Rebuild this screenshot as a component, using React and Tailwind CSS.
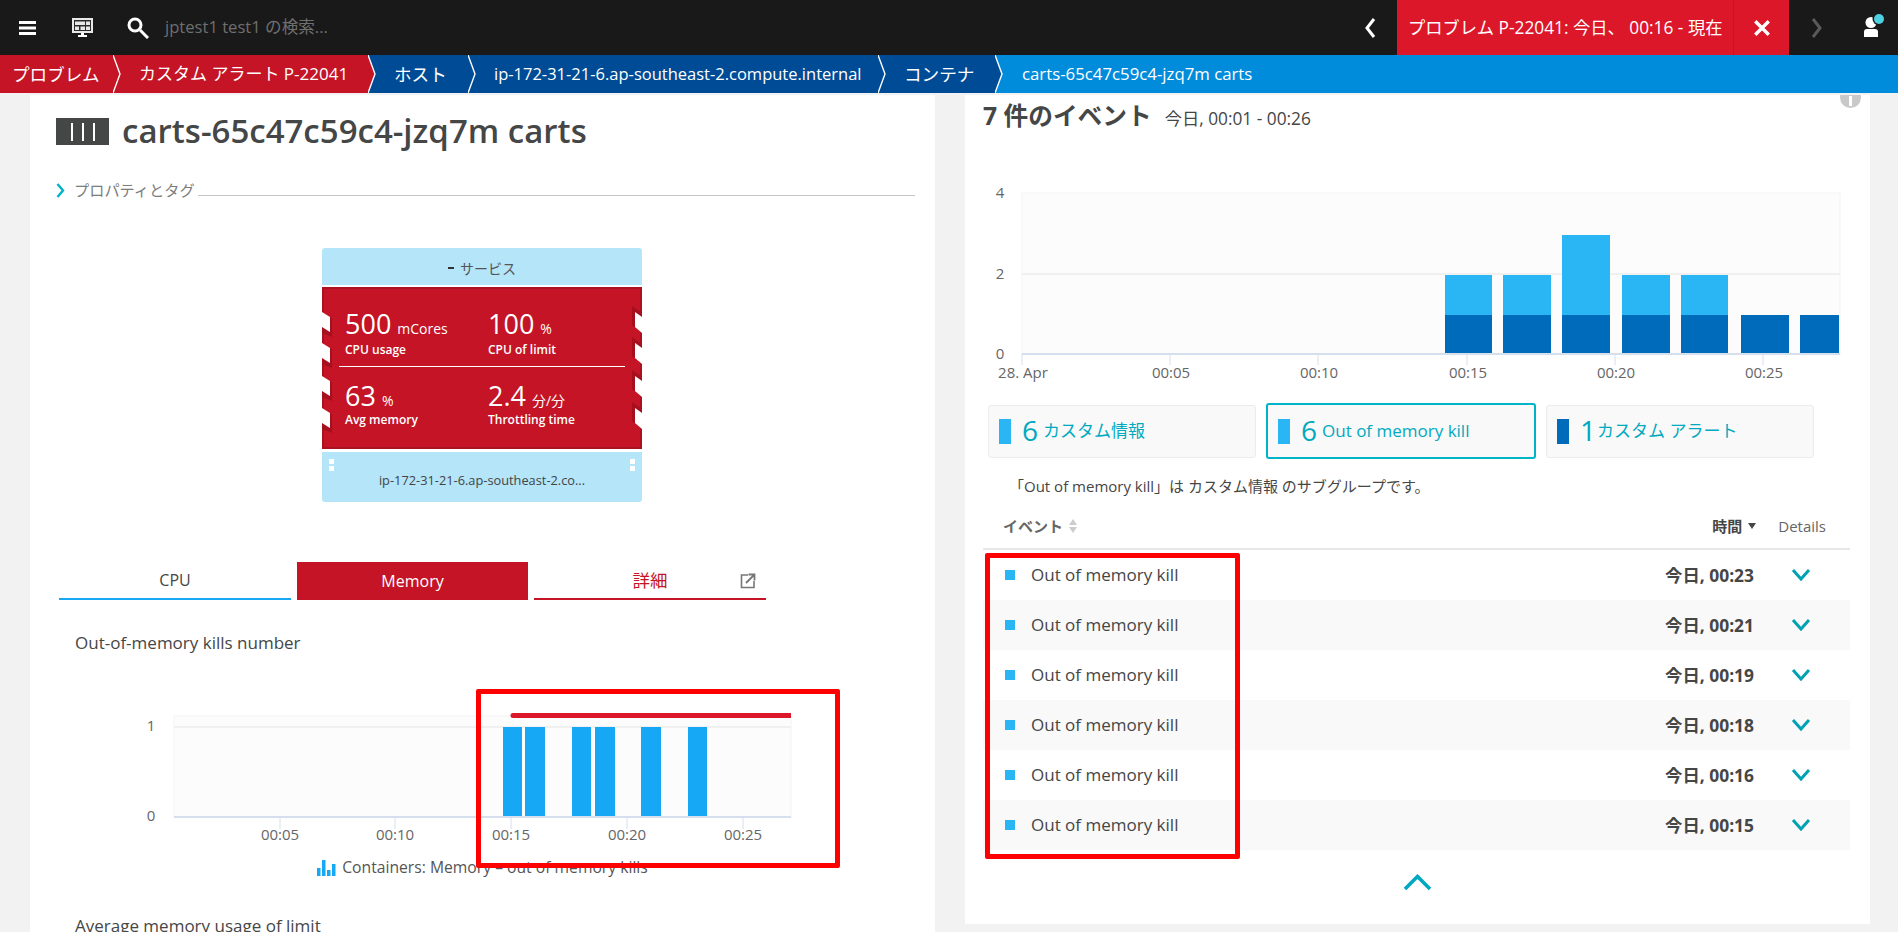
import React from "react";

const F = { fontFamily: '"Open Sans","Noto Sans CJK JP",sans-serif' };

function Sep({ left, right }) {
  return (
    <svg width="10" height="38" viewBox="0 0 10 38" className="shrink-0 block" style={{ background: right }}>
      <polygon points="0,0 7,19 0,38" fill={left} />
      <polyline points="0,0 7,19 0,38" fill="none" stroke="#fff" strokeWidth="1.4" />
    </svg>
  );
}

function Metric({ value, unit, label, cls, labelCls }) {
  return (
    <div className={cls}>
      <div className="h-[28px] flex items-baseline text-white leading-[28px]">
        <span className="text-[27px]">{value}</span>
        <span className="text-[14px] ml-[6px]">{unit}</span>
      </div>
      <div className={"text-white text-[12px] font-semibold leading-[18px] " + labelCls}>{label}</div>
    </div>
  );
}

function Notches({ right }) {
  const ys = [24, 55, 88, 120];
  return (
    <svg width="10" height="162" viewBox="0 0 10 162" className={"absolute top-[-2px] " + (right ? "right-[-2px]" : "left-[-2px]")}>
      {ys.map((y) =>
        right ? (
          <g key={y}>
            <polygon points={`0,${y - 5} 10,${y + 2} 10,${y + 6} 3,${y + 1} 3,${y + 16} 0,${y + 14}`} fill="#a5101f" />
            <polygon points={`3,${y + 1} 10,${y + 6} 10,${y + 22} 3,${y + 16}`} fill="#fff" />
          </g>
        ) : (
          <g key={y}>
            <polygon points={`0,${y + 16} 8,${y + 21} 8,${y + 6} 10,${y + 7} 10,${y + 26} 0,${y + 22}`} fill="#a5101f" />
            <polygon points={`0,${y + 1} 8,${y + 6} 8,${y + 21} 0,${y + 16}`} fill="#fff" />
          </g>
        )
      )}
    </svg>
  );
}

function LeftChart() {
  const bars = [[503, 522], [525, 545], [572, 591], [595, 615], [641, 661], [688, 707]];
  const ticks = [[280, "00:05"], [395, "00:10"], [511, "00:15"], [627, "00:20"], [743, "00:25"]];
  return (
    <svg width="905" height="150" viewBox="30 700 905 150" className="block">
      <rect x="174" y="716" width="617" height="101" fill="#fcfcfc" stroke="#f3f3f3" />
      <line x1="174" x2="791" y1="727" y2="727" stroke="#f0f0f0" strokeWidth="2" />
      {bars.map(([a, b]) => (
        <rect key={a} x={a} y="727" width={b - a} height="90" fill="#16a8f5" />
      ))}
      <line x1="174" x2="791" y1="817" y2="817" stroke="#d6dfee" strokeWidth="2" />
      {ticks.map(([x, t]) => (
        <g key={t}>
          <line x1={x} x2={x} y1="817" y2="829" stroke="#d6dfee" />
          <text x={x} y="840" textAnchor="middle" fontSize="15" fill="#666" style={F}>{t}</text>
        </g>
      ))}
      <text x="151" y="731" textAnchor="middle" fontSize="15" fill="#666" style={F}>1</text>
      <text x="151" y="821" textAnchor="middle" fontSize="15" fill="#666" style={F}>0</text>
      <path d="M513 713 H791 V718 H513 A2.5 2.5 0 0 1 513 713 Z" fill="#dc172a" />
    </svg>
  );
}

function RightChart() {
  const bars = [[1445, 1492, 2], [1503, 1551, 2], [1562, 1610, 3], [1622, 1670, 2], [1681, 1728, 2], [1741, 1789, 1], [1800, 1839, 1]];
  const ticks = [[1170, "00:05"], [1318, "00:10"], [1467, "00:15"], [1615, "00:20"], [1763, "00:25"]];
  return (
    <svg width="905" height="210" viewBox="965 180 905 210" className="block">
      <rect x="1022" y="193" width="818" height="161" fill="#fcfcfc" stroke="#f3f3f3" />
      <line x1="1022" x2="1840" y1="274" y2="274" stroke="#f0f0f0" strokeWidth="2" />
      {bars.map(([a, b, n]) => (
        <g key={a}>
          {n > 1 && <rect x={a} y={n === 3 ? 235 : 275} width={b - a} height={n === 3 ? 80 : 40} fill="#2ab6f4" />}
          <rect x={a} y="315" width={b - a} height="39" fill="#006bba" />
        </g>
      ))}
      <line x1="1022" x2="1840" y1="354" y2="354" stroke="#d6dfee" strokeWidth="2" />
      <line x1="1022" x2="1022" y1="354" y2="365" stroke="#d6dfee" />
      {ticks.map(([x, t]) => (
        <g key={t}>
          <line x1={x} x2={x} y1="354" y2="365" stroke="#d6dfee" />
          <text x={x + 1} y="378" textAnchor="middle" fontSize="15" fill="#666" style={F}>{t}</text>
        </g>
      ))}
      <text x="1023" y="378" textAnchor="middle" fontSize="15" fill="#666" style={F}>28. Apr</text>
      <text x="1000" y="198" textAnchor="middle" fontSize="15" fill="#666" style={F}>4</text>
      <text x="1000" y="279" textAnchor="middle" fontSize="15" fill="#666" style={F}>2</text>
      <text x="1000" y="359" textAnchor="middle" fontSize="15" fill="#666" style={F}>0</text>
    </svg>
  );
}

function Chevron({ up }) {
  return up ? (
    <svg width="29" height="17" viewBox="0 0 29 17" className="block">
      <polyline points="2,15 14.5,2.5 27,15" fill="none" stroke="#00a9c0" strokeWidth="3.6" />
    </svg>
  ) : (
    <svg width="20" height="14" viewBox="0 0 20 14" className="block">
      <polyline points="2,2 10,11 18,2" fill="none" stroke="#00a1b2" strokeWidth="3" />
    </svg>
  );
}

function EventCard({ color, num, text, active, w, gap }) {
  return (
    <div
      className={
        "flex items-center rounded-[3px] bg-[#f9f9f9] pl-[10px] " +
        (active ? "h-[56px] border-2 border-[#00b4c8]" : "h-[53px] border border-[#ececec]")
      }
      style={{ width: w }}
    >
      <div className="w-[12px] h-[25px] shrink-0" style={{ background: color }} />
      <span className="text-[28px] text-[#00a9c0] ml-[11px] leading-[34px] -mt-[2px]">{num}</span>
      <span className={"text-[17px] text-[#00a9c0] whitespace-nowrap " + gap}>{text}</span>
    </div>
  );
}

const rows = ["00:23", "00:21", "00:19", "00:18", "00:16", "00:15"];

export default function App() {
  return (
    <div className="relative w-[1898px] h-[932px] overflow-hidden bg-[#f2f2f2] text-[#454646]" style={F}>
      {/* top bar */}
      <div className="h-[55px] bg-[#191919] flex items-center">
        <svg width="17" height="14" viewBox="0 0 17 14" className="ml-[19px]">
          <rect width="17" height="3" fill="#fff" /><rect y="5.5" width="17" height="3" fill="#fff" /><rect y="11" width="17" height="3" fill="#fff" />
        </svg>
        <svg width="21" height="19" viewBox="0 0 21 19" className="ml-[36px]">
          <rect x="0" y="0" width="21" height="15" fill="#e8e8e8" />
          <rect x="2" y="2" width="17" height="11" fill="#2a2a2a" />
          <rect x="3" y="3.5" width="10" height="3.5" fill="#e8e8e8" /><rect x="14" y="3.5" width="4" height="3.5" fill="#e8e8e8" />
          <rect x="3" y="8.5" width="4" height="3.5" fill="#e8e8e8" /><rect x="8.5" y="8.5" width="4.5" height="3.5" fill="#e8e8e8" /><rect x="14" y="8.5" width="4" height="3.5" fill="#e8e8e8" />
          <rect x="9" y="15" width="3" height="2" fill="#fff" /><rect x="6" y="17" width="9" height="2" fill="#fff" />
        </svg>
        <svg width="22" height="22" viewBox="0 0 22 22" className="ml-[34px]">
          <circle cx="8" cy="8" r="6" fill="none" stroke="#fff" strokeWidth="3" />
          <line x1="13" y1="13" x2="21" y2="21" stroke="#fff" strokeWidth="3" />
        </svg>
        <span className="ml-[16px] text-[16.6px] text-[#6f6f6f]">jptest1 test1 の検索...</span>
        <div className="flex-1" />
        <svg width="12" height="20" viewBox="0 0 12 20" className="mr-[21px]">
          <polyline points="10,1 3,10 10,19" fill="none" stroke="#fff" strokeWidth="3" />
        </svg>
        <div className="w-[392px] h-[55px] bg-[#dc172a] flex items-center text-white">
          <div className="w-[337px] pl-[11px] text-[17.3px] whitespace-nowrap border-r border-[#c41425] h-full flex items-center">プロブレム P-22041: 今日、 00:16 - 現在</div>
          <div className="flex-1 flex justify-center">
            <svg width="18" height="18" viewBox="0 0 16 16">
              <path d="M2 2 L14 14 M14 2 L2 14" stroke="#fff" strokeWidth="3" />
            </svg>
          </div>
        </div>
        <svg width="12" height="20" viewBox="0 0 12 20" className="ml-[22px]">
          <polyline points="2,1 9,10 2,19" fill="none" stroke="#5a5a5a" strokeWidth="3" />
        </svg>
        <svg width="22" height="28" viewBox="0 0 22 28" className="ml-[40px] mr-[13px]">
          <circle cx="8" cy="8.5" r="5.5" fill="#fff" />
          <path d="M1 23 V18 Q1 15 4 15 H12 Q15 15 15 18 V23 Z" fill="#fff" />
          <circle cx="16" cy="5" r="6.5" fill="#191919" />
          <circle cx="16" cy="5" r="5" fill="#4dd0e1" />
        </svg>
      </div>
      {/* breadcrumbs */}
      <div className="h-[38px] flex items-stretch text-white text-[17px] whitespace-nowrap leading-[38px]">
        <div className="w-[113px] pl-[12px] bg-[#c41425] text-[17.6px]">プロブレム</div>
        <Sep left="#c41425" right="#c41425" />
        <div className="w-[245px] pl-[16px] bg-[#c41425]">カスタム アラート P-22041</div>
        <Sep left="#c41425" right="#004b96" />
        <div className="w-[90px] pl-[16px] bg-[#004b96] text-[17.6px]">ホスト</div>
        <Sep left="#004b96" right="#004b96" />
        <div className="w-[400px] pl-[16px] bg-[#004b96] text-[16.5px]">ip-172-31-21-6.ap-southeast-2.compute.internal</div>
        <Sep left="#004b96" right="#004b96" />
        <div className="w-[107px] pl-[16px] bg-[#004b96] text-[17.6px]">コンテナ</div>
        <Sep left="#004b96" right="#008cdb" />
        <div className="flex-1 pl-[17px] bg-[#008cdb] text-[16.8px]">carts-65c47c59c4-jzq7m carts</div>
      </div>
      {/* panels */}
      <div className="flex gap-[30px] px-[30px] pt-[2px] items-start">
        {/* left */}
        <div className="w-[905px] h-[900px] bg-white pt-[23px]">
          <div className="ml-[26px] flex items-center h-[27px]">
            <div className="w-[53px] h-[27px] bg-[#454646] flex items-center justify-center gap-[9px]">
              <div className="w-[2px] h-[18px] bg-white" /><div className="w-[2px] h-[18px] bg-white" /><div className="w-[2px] h-[18px] bg-white" />
            </div>
            <h1 className="ml-[13px] text-[33px] font-semibold leading-[34px] whitespace-nowrap -mt-[1px]">carts-65c47c59c4-jzq7m carts</h1>
          </div>
          <div className="ml-[26px] mr-[20px] mt-[36px] h-[18px] flex items-center">
            <svg width="9" height="15" viewBox="0 0 9 15"><polyline points="1.5,1 7,7.5 1.5,14" fill="none" stroke="#00b4c8" strokeWidth="2.4" /></svg>
            <span className="ml-[9px] text-[15.2px] text-[#7c7c7c] leading-[18px] whitespace-nowrap">プロパティとタグ</span>
            <div className="ml-[3px] flex-1 h-px bg-[#c4c4c4] mt-[10px]" />
          </div>
          {/* process card */}
          <div className="ml-[292px] mt-[49px] w-[320px]">
            <div className="h-[37px] bg-[#b4e5f9] rounded-t-[3px] flex items-center justify-center text-[14px] text-[#555] pt-[3px]">
              <span className="w-[6px] h-[2px] bg-[#333] mr-[6px]" />サービス
            </div>
            <div className="relative mt-[2px] h-[162px] bg-[#c41425] border-2 border-[#ab1120]">
              <Notches />
              <Notches right />
              <div className="flex pt-[21px] h-[77px] pl-[21px]">
                <Metric cls="w-[143px]" labelCls="mt-[3px]" value="500" unit="mCores" label="CPU usage" />
                <Metric labelCls="mt-[3px]" value="100" unit="%" label="CPU of limit" />
              </div>
              <div className="mx-[15px] h-px bg-white" />
              <div className="flex pt-[15px] pl-[21px]">
                <Metric cls="w-[143px]" labelCls="mt-[1px]" value="63" unit="%" label="Avg memory" />
                <Metric labelCls="mt-[1px]" value="2.4" unit="分/分" label="Throttling time" />
              </div>
            </div>
            <div className="relative mt-[3px] h-[50px] bg-[#b4e5f9] rounded-b-[3px] flex items-center justify-center text-[12.8px] text-[#444] pt-[8px]">
              <div className="absolute left-[7px] top-[7px] w-[5px] h-[12px] flex flex-col gap-[2px]"><div className="h-[5px] bg-white" /><div className="h-[5px] bg-white" /></div>
              <div className="absolute right-[7px] top-[7px] w-[5px] h-[12px] flex flex-col gap-[2px]"><div className="h-[5px] bg-white" /><div className="h-[5px] bg-white" /></div>
              ip-172-31-21-6.ap-southeast-2.co...
            </div>
          </div>
          {/* tabs */}
          <div className="ml-[29px] mt-[60px] flex gap-[6px] text-[16px]">
            <div className="w-[232px] h-[38px] border-b-2 border-[#16a8f5] flex items-center justify-center">CPU</div>
            <div className="w-[231px] h-[38px] bg-[#c41425] text-white flex items-center justify-center">Memory</div>
            <div className="relative w-[232px] h-[38px] border-b-2 border-[#c41425] text-[#c41425] text-[17.5px] flex items-center justify-center">
              詳細
              <svg width="16" height="16" viewBox="0 0 16 16" className="absolute right-[10px] top-[11px]">
                <path d="M8 2 H1.5 V14.5 H14 V8" fill="none" stroke="#777" strokeWidth="1.6" />
                <path d="M6 10 L13.5 2.5 M8.5 1.5 H14.5 V7.5" fill="none" stroke="#777" strokeWidth="1.8" />
              </svg>
            </div>
          </div>
          <div className="ml-[45px] mt-[31px] text-[17px] leading-[24px]">Out-of-memory kills number</div>
          <div className="mt-[45px]"><LeftChart /></div>
          <div className="mt-[8px] h-[20px] flex items-center justify-center text-[15.7px] text-[#555] whitespace-nowrap">
            <svg width="19" height="16" viewBox="0 0 19 16" className="mr-[6px]">
              <rect x="0" y="8" width="3.5" height="8" fill="#16a8f5" /><rect x="5" y="0" width="3.5" height="16" fill="#16a8f5" /><rect x="10" y="10" width="3.5" height="6" fill="#16a8f5" /><rect x="15" y="4" width="3.5" height="12" fill="#16a8f5" />
            </svg>
            Containers: Memory – out of memory kills
          </div>
          <div className="ml-[45px] mt-[36px] text-[17px] leading-[24px]">Average memory usage of limit</div>
        </div>
        {/* right */}
        <div className="relative w-[905px] h-[829px] bg-white pt-[6px]">
          <div className="absolute right-[9px] top-0 w-[21px] h-[13px] overflow-hidden">
            <div className="w-[21px] h-[21px] -mt-[8px] rounded-full bg-[#c9c9c9] flex justify-center items-end pb-[2px]"><div className="w-[3px] h-[10px] bg-white" /></div>
          </div>
          <div className="flex items-baseline pl-[18px] h-[30px]">
            <span className="text-[24.7px] font-bold leading-[30px]">7 件のイベント</span>
            <span className="ml-[13px] text-[17.3px]">今日, 00:01 - 00:26</span>
          </div>
          <div className="mt-[49px]"><RightChart /></div>
          <div className="mt-[13px] h-[56px] ml-[23px] flex items-center gap-[10px]">
            <EventCard w="268px" color="#2ab6f4" num="6" gap="ml-[5px]" text="カスタム情報" />
            <EventCard w="270px" color="#2ab6f4" num="6" gap="ml-[5px]" text="Out of memory kill" active />
            <EventCard w="268px" color="#006bba" num="1" gap="ml-[1px]" text="カスタム アラート" />
          </div>
          <div className="mt-[15px] ml-[44px] text-[15px] leading-[24px]">「Out of memory kill」は カスタム情報 のサブグループです。</div>
          <div className="mt-[6px] ml-[18px] mr-[20px] h-[46px] border-b-2 border-[#e8e8e8] flex items-center text-[15px]">
            <span className="ml-[20px] font-semibold text-[#666]">イベント</span>
            <svg width="8" height="14" viewBox="0 0 8 14" className="ml-[6px]"><polygon points="4,0 8,6 0,6" fill="#ccc" /><polygon points="4,14 8,8 0,8" fill="#ccc" /></svg>
            <div className="flex-1" />
            <span className="font-semibold">時間</span>
            <svg width="8" height="6" viewBox="0 0 8 6" className="ml-[6px]"><polygon points="0,0 8,0 4,6" fill="#454646" /></svg>
            <span className="ml-[22px] mr-[24px] text-[#666]">Details</span>
          </div>
          <div className="ml-[18px] mr-[20px]">
            {rows.map((t, i) => (
              <div key={t} className={"h-[50px] flex items-center " + (i % 2 ? "bg-[#f9f9f9]" : "bg-white")}>
                <div className="ml-[22px] w-[10px] h-[10px] bg-[#2ab6f4]" />
                <span className="ml-[16px] text-[17px]">Out of memory kill</span>
                <div className="flex-1" />
                <span className="font-bold text-[17.4px]">今日, {t}</span>
                <div className="ml-[37px] mr-[39px]"><Chevron /></div>
              </div>
            ))}
          </div>
          <div className="mt-[24px] flex justify-center"><Chevron up /></div>
        </div>
      </div>
      {/* annotation rectangles */}
      <div className="absolute left-[476px] top-[689px] w-[364px] h-[179px] border-[5px] border-[#ff0000] rounded-[2px]" />
      <div className="absolute left-[985px] top-[553px] w-[255px] h-[306px] border-[5px] border-[#ff0000] rounded-[2px]" />
    </div>
  );
}
